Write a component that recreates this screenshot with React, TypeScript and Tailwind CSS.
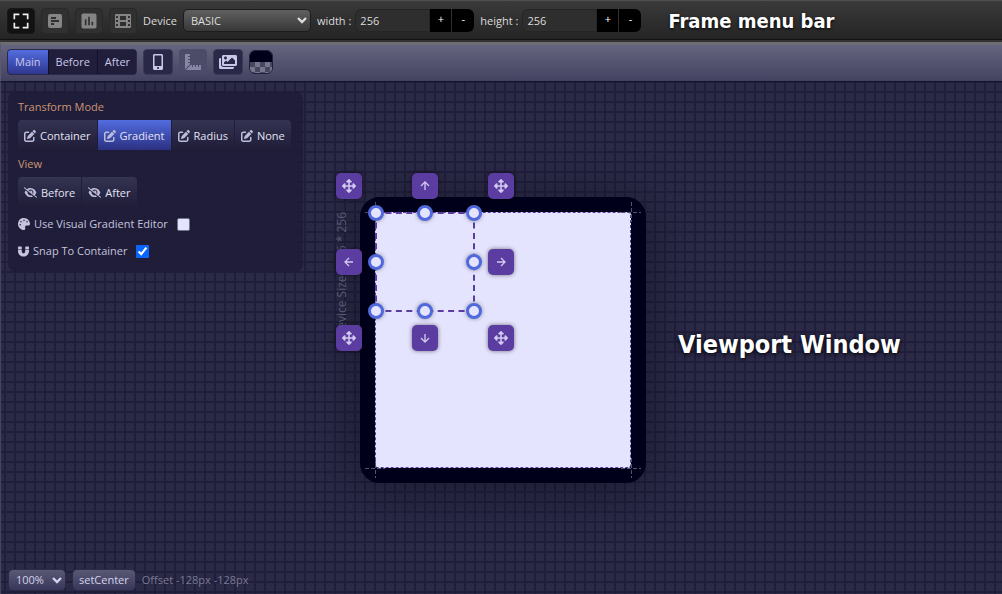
import { useState, type ReactNode } from 'react';
import { BiFullscreen, BiUpArrowAlt, BiDownArrowAlt, BiLeftArrowAlt, BiRightArrowAlt } from 'react-icons/bi';
import { FaArrowsAlt, FaImages, FaMagnet, FaMobileAlt, FaPalette, FaRulerCombined } from 'react-icons/fa';
import { FaEyeSlash, FaPenToSquare } from 'react-icons/fa6';
import { MdPoll } from 'react-icons/md';

function NotesIcon() {
  return (
    <svg width="16" height="16" viewBox="0 0 16 16" fill="currentColor" aria-hidden="true">
      <path fillRule="evenodd" d="M3 1h10a2 2 0 0 1 2 2v10a2 2 0 0 1-2 2H3a2 2 0 0 1-2-2V3a2 2 0 0 1 2-2zm1 3v2h5V4zm0 3v2h8V7zm0 3v2h3v-2z" />
    </svg>
  );
}

function FilmIcon() {
  return (
    <svg width="18" height="16" viewBox="0 0 18 16" fill="currentColor" aria-hidden="true">
      <path fillRule="evenodd" d="M2 1h14a1 1 0 0 1 1 1v12a1 1 0 0 1-1 1H2a1 1 0 0 1-1-1V2a1 1 0 0 1 1-1zm4 2v4h6V3zm0 6v4h6V9zM2 3v2h2V3zm0 4v2h2V7zm0 4v2h2v-2zm12-8v2h2V3zm0 4v2h2V7zm0 4v2h2v-2z" />
    </svg>
  );
}

function Chevron() {
  return (
    <svg className="pointer-events-none col-start-1 row-start-1 mr-[4px] self-center justify-self-end" width="10" height="7" viewBox="0 0 10 7" fill="none" stroke="currentColor" strokeWidth="2.4" aria-hidden="true">
      <path d="M1 1l4 4 4-4" />
    </svg>
  );
}

function FrameTab({ label, active, children }: { label: string; active?: boolean; children: ReactNode }) {
  return (
    <button
      type="button"
      aria-label={label}
      className={`flex h-[26px] w-7 items-center justify-center rounded border ${
        active ? 'border-[#181818] bg-[#121212] text-[#f0f0f0]' : 'border-[#292929] bg-[#303030] text-[#858585]'
      }`}
    >
      {children}
    </button>
  );
}

function SizeField({ label }: { label: string }) {
  const [value, setValue] = useState(256);
  return (
    <div className="flex items-center gap-1">
      <label htmlFor={`${label}-field`}>{label} :</label>
      <div className="flex h-[23px]">
        <input
          id={`${label}-field`}
          value={value}
          onChange={(e) => setValue(Number(e.target.value) || 0)}
          className="w-[75px] rounded-l-md border border-[#252525] bg-[#2e2e2e] px-1 outline-none"
        />
        <button type="button" onClick={() => setValue(value + 1)} aria-label={`Increase ${label}`} className="mr-px w-[21px] bg-black pb-1 text-white">+</button>
        <button type="button" onClick={() => setValue(value - 1)} aria-label={`Decrease ${label}`} className="w-[22px] rounded-r-md bg-black pb-1 text-white">-</button>
      </div>
    </div>
  );
}

function PanelButton({ active, icon, children }: { active?: boolean; icon: ReactNode; children: ReactNode }) {
  return (
    <button
      type="button"
      className={`flex h-[30px] items-center gap-1 px-[6px] pt-px text-[#e4e3f5] ${
        active ? 'bg-linear-to-b from-[#536de0] to-[#2b3183]' : 'bg-linear-to-b from-[#343351] to-[#1f1d38]'
      }`}
    >
      <span className="text-[#bdbcd8]">{icon}</span>
      {children}
    </button>
  );
}

function MoveButton({ label, children }: { label: string; children: ReactNode }) {
  return (
    <button type="button" aria-label={label} className="flex size-[26px] items-center justify-center rounded-[5px] bg-[#5b3da1] text-[#d3caf0] shadow-[0_0_4px_rgba(0,0,0,0.5)]">
      {children}
    </button>
  );
}

function Handle() {
  return <span className="size-4 rounded-full border-3 border-[#5069dc] bg-[#e5e4ff] shadow-[0_0_4px_rgba(0,0,0,0.4)]" />;
}

function CornerMark({ place }: { place: string }) {
  return (
    <svg className={`absolute size-5 text-[#55546f] ${place}`} viewBox="0 0 20 20" stroke="currentColor" strokeDasharray="4 2" aria-hidden="true">
      <path d="M10.5 0v20M0 10.5h20" />
    </svg>
  );
}

function Device() {
  return (
    <div className="relative size-[286px] rounded-[20px] border-[15px] border-[#00001a] bg-[#00001a] shadow-[0_5px_50px_rgba(0,0,10,0.35)]">
      <div className="size-full rounded-[3px] border border-dashed border-[#5b3da1] bg-[#e5e4ff]" />
      <CornerMark place="-top-[10px] -left-[10px]" />
      <CornerMark place="-top-[10px] -right-[10px]" />
      <CornerMark place="-bottom-[10px] -left-[10px]" />
      <CornerMark place="-bottom-[10px] -right-[10px]" />
      <div className="absolute top-0 -left-[41px] rotate-180 text-[12px] leading-4 whitespace-nowrap text-[#5c5b76] [writing-mode:vertical-rl]">
        Device Size : 256 * 256
      </div>
      <div className="absolute top-0 left-0 size-[100px] border-2 border-dashed border-[#5b3da1]" />
      <div className="absolute -top-[7px] -left-[7px] grid grid-cols-[repeat(3,16px)] gap-[33px]">
        <Handle />
        <Handle />
        <Handle />
        <Handle />
        <span />
        <Handle />
        <Handle />
        <Handle />
        <Handle />
      </div>
      <div className="absolute -top-[39px] -left-[39px] grid grid-cols-[repeat(3,26px)] gap-[50px]">
        <MoveButton label="Move top left"><FaArrowsAlt size={14} /></MoveButton>
        <MoveButton label="Move up"><BiUpArrowAlt size={16} /></MoveButton>
        <MoveButton label="Move top right"><FaArrowsAlt size={14} /></MoveButton>
        <MoveButton label="Move left"><BiLeftArrowAlt size={16} /></MoveButton>
        <span />
        <MoveButton label="Move right"><BiRightArrowAlt size={16} /></MoveButton>
        <MoveButton label="Move bottom left"><FaArrowsAlt size={14} /></MoveButton>
        <MoveButton label="Move down"><BiDownArrowAlt size={16} /></MoveButton>
        <MoveButton label="Move bottom right"><FaArrowsAlt size={14} /></MoveButton>
      </div>
    </div>
  );
}

function TransformPanel() {
  return (
    <section className="absolute top-[9px] left-[7px] flex flex-col items-start rounded-lg bg-[#1e1c37]/90 pt-2 pr-3 pb-[13px] pl-[10px] text-[#c5c4de]">
      <h2 className="leading-4 text-[#cc9575]">Transform Mode</h2>
      <div className="mt-[5px] flex gap-px overflow-hidden rounded">
        <PanelButton icon={<FaPenToSquare size={12} />}>Container</PanelButton>
        <PanelButton active icon={<FaPenToSquare size={12} />}>Gradient</PanelButton>
        <PanelButton icon={<FaPenToSquare size={12} />}>Radius</PanelButton>
        <PanelButton icon={<FaPenToSquare size={12} />}>None</PanelButton>
      </div>
      <h2 className="mt-[6px] leading-4 text-[#cc9575]">View</h2>
      <div className="mt-[5px] flex gap-px overflow-hidden rounded">
        <PanelButton icon={<FaEyeSlash size={13} />}>Before</PanelButton>
        <PanelButton icon={<FaEyeSlash size={13} />}>After</PanelButton>
      </div>
      <label className="mt-[9px] flex h-4 items-center gap-1">
        <FaPalette size={12} />
        Use Visual Gradient Editor
        <input type="checkbox" className="ml-[5px] size-[13px] appearance-none rounded-[2px] border border-[#77768e] bg-[#e5e4ff] checked:bg-[#0866ff]" />
      </label>
      <label className="mt-[11px] flex h-4 items-center gap-1">
        <FaMagnet size={11} />
        Snap To Container
        <input type="checkbox" defaultChecked className="ml-1 size-[13px] accent-[#0866ff]" />
      </label>
    </section>
  );
}

export default function App() {
  return (
    <div className="flex min-h-screen flex-col bg-[#2a2946] font-['Open_Sans','Noto_Sans',sans-serif] text-[11px] leading-4">
      <header className="flex h-[42px] shrink-0 items-center gap-[6px] border-t border-b-2 border-t-[#505050] border-b-[#333] bg-linear-to-b from-[#3a3a3a] to-[#242424] pl-[7px] text-[#dcdcdc] shadow-[inset_0_-1px_0_#111]">
        <nav className="flex gap-[6px]">
          <FrameTab label="Frame" active><BiFullscreen size={20} /></FrameTab>
          <FrameTab label="Notes"><NotesIcon /></FrameTab>
          <FrameTab label="Chart"><MdPoll size={20} /></FrameTab>
          <FrameTab label="Film"><FilmIcon /></FrameTab>
        </nav>
        <label htmlFor="device">Device</label>
        <div className="grid">
          <select id="device" className="col-start-1 row-start-1 h-[23px] w-32 appearance-none rounded-[5px] border border-[#1c1c1c] bg-linear-to-b from-[#606060] to-[#383838] px-[7px] outline-none">
            <option>BASIC</option>
          </select>
          <Chevron />
        </div>
        <SizeField label="width" />
        <SizeField label="height" />
        <h1 className="ml-[21px] font-['DejaVu_Sans_Condensed','DejaVu_Sans',sans-serif] text-[20px] leading-6 font-bold whitespace-nowrap text-white [text-shadow:0_1px_3px_#000]">
          Frame menu bar
        </h1>
      </header>

      <div className="flex h-10 shrink-0 items-center gap-[6px] border-t-3 border-b border-t-[#6d6c70] border-b-[#15132c] border-l border-l-[#5a5970] bg-linear-to-b from-[#66657f] to-[#434260] pb-[2px] pl-[6px] text-[#c9c8ea]">
        <div className="flex h-[26px] gap-px overflow-hidden rounded border border-[#2a2948] bg-[#12112b]">
          <button type="button" className="bg-linear-to-b from-[#536de0] to-[#2f378f] px-[7px]">Main</button>
          <button type="button" className="bg-[#201e3a] px-[7px]">Before</button>
          <button type="button" className="bg-[#201e3a] pr-[6px] pl-[7px]">After</button>
        </div>
        <button type="button" aria-label="Device preview" className="flex h-[26px] w-[30px] items-center justify-center rounded border border-[#3a3959] bg-[#2a2847]"><FaMobileAlt size={16} /></button>
        <button type="button" aria-label="Rulers" className="flex h-[26px] w-7 items-center justify-center rounded bg-[#4c4b68] text-[#8886a6]"><FaRulerCombined size={16} /></button>
        <button type="button" aria-label="Images" className="flex h-[26px] w-[30px] items-center justify-center rounded border border-[#3a3959] bg-[#2a2847]"><FaImages size={18} /></button>
        <button type="button" aria-label="Background" className="flex size-6 flex-col overflow-hidden rounded-[6px] border border-[#201e3a]">
          <span className="w-full flex-1 bg-[#00001a]" />
          <span className="w-full flex-1 bg-[repeating-conic-gradient(#77768c_0_25%,#47465f_0_50%)] bg-[size:10px_10px]" />
        </button>
      </div>

      <main className="relative grid flex-1 place-items-center overflow-hidden border-l border-l-[#454461] bg-[linear-gradient(#201e3b_2px,transparent_2px),linear-gradient(90deg,#201e3b_2px,transparent_2px)] bg-[size:10px_10px] bg-[position:3px_9px] pt-1 pl-[3px]">
        <Device />
        <TransformPanel />
        <h2 className="absolute top-[248px] left-[677px] font-['DejaVu_Sans_Condensed','DejaVu_Sans',sans-serif] text-[25px] leading-[30px] font-bold whitespace-nowrap text-white [text-shadow:0_1px_4px_#000]">
          Viewport Window
        </h2>
        <div className="absolute bottom-[3px] left-[7px] flex items-center gap-[6px] text-[#d3d2ee]">
          <div className="grid">
            <select aria-label="Zoom" className="col-start-1 row-start-1 h-[22px] w-[58px] appearance-none rounded-[5px] border border-[#2b2a47] bg-linear-to-b from-[#5a5974] to-[#38375a] px-[7px] outline-none">
              <option>100%</option>
            </select>
            <Chevron />
          </div>
          <button type="button" className="h-[22px] rounded-[5px] border border-[#2b2a47] bg-linear-to-b from-[#5a5974] to-[#38375a] px-[6px]">setCenter</button>
          <span className="text-[#7b7a92]">Offset -128px -128px</span>
        </div>
      </main>
    </div>
  );
}
